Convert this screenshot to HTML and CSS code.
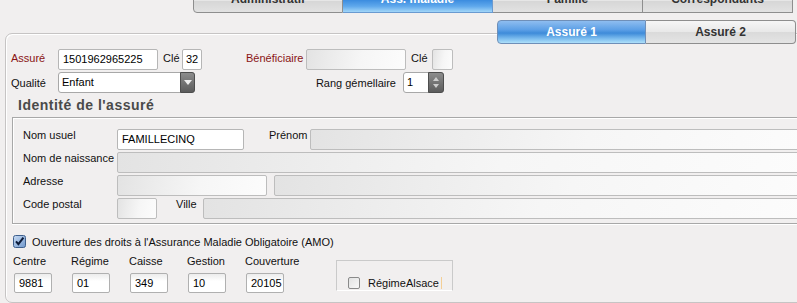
FILE: index.html
```html
<!DOCTYPE html>
<html lang="fr">
<head>
    <meta charset="UTF-8">
    <title>Ass. maladie</title>
    <link rel="stylesheet" href="styles.css">
</head>
<body>
    <nav class="top-tabs">
        <div class="tab">Administratif</div>
        <div class="tab active">Ass. maladie</div>
        <div class="tab">Famille</div>
        <div class="tab">Correspondants</div>
    </nav>

    <section class="panel">
        <div class="sub-tabs">
            <div class="sub-tab active">Assuré 1</div>
            <div class="sub-tab">Assuré 2</div>
        </div>

        <!-- Assuré / Bénéficiaire -->
        <div class="row row-1">
            <span class="lbl lbl-main required">Assuré</span>
            <div class="field w-100">1501962965225</div>
            <span class="lbl lbl-cle">Clé</span>
            <div class="field w-20">32</div>
            <span class="lbl lbl-benef required">Bénéficiaire</span>
            <div class="field empty w-100"></div>
            <span class="lbl lbl-cle2">Clé</span>
            <div class="field empty w-21"></div>
        </div>

        <div class="row row-2">
            <span class="lbl lbl-main">Qualité</span>
            <div class="select">
                <span class="select-text">Enfant</span>
                <span class="select-btn"><i class="arrow-down"></i></span>
            </div>
            <span class="lbl lbl-rang">Rang gémellaire</span>
            <div class="spinner">
                <span class="spinner-text">1</span>
                <span class="spinner-btn"><i class="arrow-up small"></i><i class="arrow-down small"></i></span>
            </div>
        </div>

        <h2 class="section-title">Identité de l'assuré</h2>

        <div class="identity">
            <div class="id-row">
                <span class="lbl lbl-id">Nom usuel</span>
                <div class="field w-127">FAMILLECINQ</div>
                <span class="lbl lbl-prenom">Prénom</span>
                <div class="field empty grow"></div>
            </div>
            <div class="id-row">
                <span class="lbl lbl-id">Nom de naissance</span>
                <div class="field empty grow"></div>
            </div>
            <div class="id-row">
                <span class="lbl lbl-id">Adresse</span>
                <div class="field empty w-150"></div>
                <div class="field empty grow addr-2"></div>
            </div>
            <div class="id-row">
                <span class="lbl lbl-id">Code postal</span>
                <div class="field empty w-40"></div>
                <span class="lbl lbl-ville">Ville</span>
                <div class="field empty grow"></div>
            </div>
        </div>

        <label class="amo">
            <svg class="check on" width="13" height="13" viewBox="0 0 13 13">
                <defs>
                    <linearGradient id="cb" x1="0" y1="0" x2="1" y2="1">
                        <stop offset="0" stop-color="#c9dcf4"/>
                        <stop offset="1" stop-color="#6f97cc"/>
                    </linearGradient>
                </defs>
                <rect x="0.5" y="0.5" width="12" height="12" rx="2" fill="url(#cb)" stroke="#3e5f8c"/>
                <path d="M3 6.3 L5.4 9.2 L10.4 2.6" fill="none" stroke="#0d1c3a" stroke-width="2"/>
            </svg>
            <span>Ouverture des droits à l'Assurance Maladie Obligatoire (AMO)</span>
        </label>

        <div class="amo-area">
            <div class="codes">
                <div class="code">
                    <span class="code-lbl">Centre</span>
                    <div class="code-field">9881</div>
                </div>
                <div class="code">
                    <span class="code-lbl">Régime</span>
                    <div class="code-field">01</div>
                </div>
                <div class="code">
                    <span class="code-lbl">Caisse</span>
                    <div class="code-field">349</div>
                </div>
                <div class="code">
                    <span class="code-lbl">Gestion</span>
                    <div class="code-field">10</div>
                </div>
                <div class="code">
                    <span class="code-lbl">Couverture</span>
                    <div class="code-field">20105</div>
                </div>
            </div>

            <div class="group-box">
                <label class="alsace">
                    <span class="check off"></span>
                    <span>RégimeAlsace</span>
                    <i class="caret"></i>
                </label>
            </div>
        </div>
    </section>
</body>
</html>
```

FILE: styles.css
```css
* {
    margin: 0;
    padding: 0;
    box-sizing: border-box;
}

body {
    width: 797px;
    height: 303px;
    overflow: hidden;
    background: #f1efef;
    font-family: 'Liberation Sans', Arial, sans-serif;
    font-size: 11px;
    color: #111;
}

/* Onglets principaux (coupés en haut) */
.top-tabs {
    display: flex;
    margin: -12px 0 0 193px;
    height: 25px;
}

.tab {
    width: 150px;
    height: 25px;
    line-height: 20px;
    text-align: center;
    font-size: 12px;
    font-weight: bold;
    color: #333;
    border: 1px solid #8e8e8e;
    border-left: none;
    background: linear-gradient(#f6f6f6 0%, #e6e6e6 50%, #d6d6d6 51%, #e2e2e2 100%);
}

.tab:first-child {
    border-left: 1px solid #8e8e8e;
    border-bottom-left-radius: 4px;
}

.tab.active {
    color: #fff;
    border-color: #6a9ad0;
    background: linear-gradient(#2f7fd6 0%, #3e8ee0 50%, #5fa8ec 75%, #a2d6f8 100%);
}

/* Panneau principal */
.panel {
    margin: 20px -20px 0 5px;
    height: 270px;
    border: 1px solid #c6c4c4;
    border-radius: 7px 0 0 7px;
    box-shadow: inset 1px 1px 0 #fff;
}

.sub-tabs {
    display: flex;
    justify-content: flex-end;
    margin: -14px 20px 0 0;
}

.sub-tab {
    width: 150px;
    height: 24px;
    line-height: 22px;
    text-align: center;
    font-size: 12px;
    font-weight: bold;
    color: #333;
    border: 1px solid #8e8e8e;
    border-left: none;
    border-radius: 0 4px 4px 0;
    background: linear-gradient(#f6f6f6 0%, #e8e8e8 50%, #dadada 51%, #e4e4e4 100%);
}

.sub-tab.active {
    width: 149px;
    color: #fff;
    border: 1px solid #6f8fb8;
    border-radius: 4px 0 0 4px;
    background: linear-gradient(#8ebdf0 0%, #5c9fe6 40%, #3e8bd9 55%, #7cbcee 80%, #aee0fa 100%);
}

.row {
    display: flex;
    align-items: center;
    height: 21px;
    margin-top: 5px;
    padding-left: 5px;
}

.row-1 .lbl {
    margin-bottom: 4px;
}

.row-2 {
    margin-top: 2px;
}

.lbl {
    white-space: nowrap;
}

.required {
    color: #8a1414;
}

.lbl-main { width: 47px; }
.lbl-cle { width: 19px; margin-left: 5px; }
.lbl-benef { width: 60px; margin-left: 44px; }
.lbl-cle2 { width: 21px; margin-left: 5px; }
.lbl-rang { width: 208px; text-align: right; padding-right: 7px; }

.field {
    height: 21px;
    line-height: 19px;
    padding: 0 4px;
    border: 1px solid #b6b6b6;
    border-radius: 2px;
    background: #fff;
    color: #000;
    white-space: nowrap;
    overflow: hidden;
}

.field.empty {
    border-color: #bdbdbd;
    background: linear-gradient(100deg, #e3e3e3 0%, #ececec 25%, #f6f6f6 55%, #fcfcfc 100%);
}

.w-20 { width: 20px; padding: 0 3px; }
.w-21 { width: 21px; }
.w-40 { width: 40px; }
.w-100 { width: 100px; }
.w-127 { width: 127px; }
.w-150 { width: 150px; }
.grow { flex: 1; }

/* Listes */
.select,
.spinner {
    display: flex;
    height: 21px;
    border: 1px solid #a8a8a8;
    border-radius: 3px;
    background: #fff;
}

.select { width: 137px; }
.spinner { width: 41px; }

.select-text,
.spinner-text {
    flex: 1;
    line-height: 19px;
    padding-left: 3px;
    color: #000;
}

.select-btn,
.spinner-btn {
    width: 15px;
    margin: -1px -1px -1px 0;
    border: 1px solid #4e4e4e;
    border-radius: 0 3px 3px 0;
    background: linear-gradient(#8c8c8c, #5c5c5c);
    display: flex;
    flex-direction: column;
    align-items: center;
    justify-content: center;
    gap: 3px;
}

.spinner-btn { width: 16px; }

.arrow-down,
.arrow-up {
    width: 0;
    height: 0;
    border-left: 4px solid transparent;
    border-right: 4px solid transparent;
}

.arrow-down { border-top: 5px solid #eee; }
.arrow-up { border-bottom: 5px solid #ddd; }

.arrow-down.small { border-top-width: 4px; border-left-width: 3px; border-right-width: 3px; border-top-color: #ccc; }
.arrow-up.small { border-bottom-width: 4px; border-left-width: 3px; border-right-width: 3px; border-bottom-color: #ccc; }

/* Identité */
.section-title {
    height: 20px;
    line-height: 20px;
    margin: 2px 0 0 12px;
    font-size: 14px;
    font-weight: bold;
    letter-spacing: 0.5px;
    color: #4a4a4a;
}

.identity {
    display: flex;
    flex-direction: column;
    gap: 2px;
    margin: 2px 0 0 6px;
    padding: 11px 0 4px 10px;
    border: 1px solid #a8a8a8;
    border-right: none;
    box-shadow: inset 1px 1px 0 #fff, 0 1px 0 #fff;
}

.id-row {
    display: flex;
    align-items: center;
    height: 21px;
}

.id-row .lbl {
    align-self: flex-start;
    line-height: 13px;
}

.lbl-id { width: 94px; }
.lbl-prenom { width: 41px; margin-left: 25px; }
.lbl-ville { width: 27px; margin-left: 19px; }
.addr-2 { margin-left: 7px; }

/* AMO */
.amo {
    display: flex;
    align-items: center;
    gap: 6px;
    height: 13px;
    margin: 11px 0 0 7px;
}

.check.off {
    display: inline-block;
    width: 12px;
    height: 12px;
    border: 1px solid #8a8a8a;
    border-radius: 2px;
    background: linear-gradient(135deg, #e2e2e2, #f8f8f8);
}

.amo-area {
    display: flex;
    align-items: flex-start;
    margin-top: 6px;
    padding-left: 8px;
}

.codes {
    display: flex;
    gap: 20px;
}

.code {
    display: flex;
    flex-direction: column;
    width: 38px;
}

.code-lbl {
    line-height: 14px;
    margin-left: -1px;
    white-space: nowrap;
}

.code-field {
    width: 38px;
    height: 20px;
    line-height: 18px;
    margin-top: 5px;
    padding-left: 4px;
    border: 1px solid #b0b0b0;
    border-radius: 2px;
    background: linear-gradient(#ececec, #fff 40%);
    color: #000;
}

.group-box {
    width: 117px;
    height: 31px;
    margin: 6px 0 0 52px;
    padding: 16px 0 0 11px;
    border: 1px solid #cacaca;
    border-bottom-color: #fff;
}

.alsace {
    display: flex;
    align-items: center;
    gap: 8px;
    height: 12px;
}

.caret {
    width: 1px;
    height: 12px;
    margin-left: -6px;
    background: #f4cf96;
}
```
